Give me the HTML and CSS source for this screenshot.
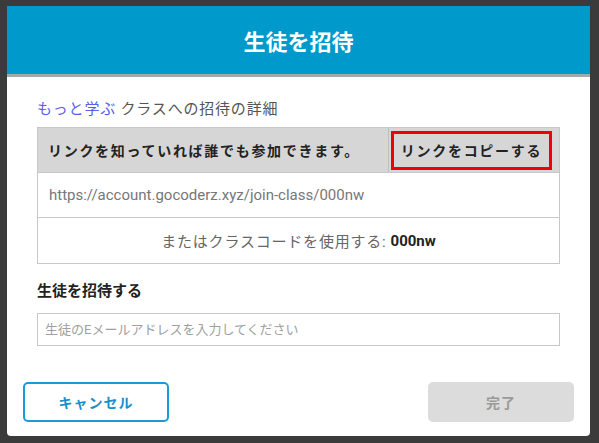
FILE: index.html
```html
<!DOCTYPE html>
<html lang="ja">
<head>
<meta charset="utf-8">
<title>生徒を招待</title>
<link rel="stylesheet" href="styles.css">
</head>
<body>
<div class="modal">
  <div class="modal-head">生徒を招待</div>
  <div class="modal-body">
    <p class="intro"><a href="#">もっと学ぶ</a> クラスへの招待の詳細</p>
    <div class="invite-table">
      <div class="row head-row">
        <div class="share-note">リンクを知っていれば誰でも参加できます。</div>
        <div class="copy-cell"><span class="copy-btn">リンクをコピーする</span></div>
      </div>
      <div class="row url-row">https://account.gocoderz.xyz/join-class/000nw</div>
      <div class="row code-row">またはクラスコードを使用する: <b>000nw</b></div>
    </div>
    <h3 class="section-title">生徒を招待する</h3>
    <input class="email" type="text" placeholder="生徒のEメールアドレスを入力してください">
  </div>
  <div class="modal-foot">
    <button class="btn cancel">キャンセル</button>
    <button class="btn done">完了</button>
  </div>
</div>
</body>
</html>
```
FILE: styles.css
```css
html, body {
  margin: 0;
  height: 100%;
}

body {
  background: #3b3b3b;
  font-family: Roboto, "Noto Sans CJK JP", sans-serif;
  padding: 6px 9px 0 7px;
  box-sizing: border-box;
}

.modal {
  width: 583px;
  background: #fff;
  border-radius: 0 0 4px 4px;
}

.modal-head {
  height: 68px;
  background: #0099cc;
  border-bottom: 3px solid #a3a8ab;
  color: #fff;
  font-weight: bold;
  font-size: 22px;
  display: flex;
  align-items: center;
  justify-content: center;
}

.modal-body {
  padding: 21px 30px 0 30px;
}

.intro {
  margin: 0;
  font-size: 15px;
  line-height: 22px;
  letter-spacing: 0.8px;
  color: #555;
}

.intro a {
  color: #5a5af0;
  text-decoration: none;
}

.invite-table {
  margin-top: 7px;
  border: 1px solid #c8c8c8;
}

.row {
  border-top: 1px solid #c8c8c8;
}

.row:first-child {
  border-top: none;
}

.head-row {
  display: flex;
  background: #d6d6d6;
  height: 44px;
  font-weight: bold;
  font-size: 14px;
  letter-spacing: 1.7px;
  color: #222;
}

.share-note {
  flex: 1;
  display: flex;
  align-items: center;
  padding-left: 10px;
  border-right: 1px solid #c0c0c0;
}

.copy-cell {
  width: 168px;
  display: flex;
  align-items: center;
  padding-left: 2px;
}

.copy-btn {
  width: 155px;
  height: 33px;
  border: 3px solid #f00000;
  display: flex;
  align-items: center;
  justify-content: center;
}

.url-row {
  height: 44px;
  display: flex;
  align-items: center;
  padding-left: 11px;
  font-size: 15px;
  color: #777;
}

.code-row {
  height: 45px;
  display: flex;
  align-items: center;
  justify-content: center;
  font-size: 15px;
  letter-spacing: 0.8px;
  color: #666;
}

.code-row b {
  color: #222;
  margin-left: 4px;
  letter-spacing: 0;
}

.section-title {
  margin: 16px 0 0 0;
  font-size: 15px;
  line-height: 22px;
  color: #222;
}

.email {
  display: block;
  width: 100%;
  box-sizing: border-box;
  margin-top: 11px;
  height: 33px;
  border: 1px solid #c8c8c8;
  padding: 0 7px;
  font-family: Roboto, "Noto Sans CJK JP", sans-serif;
  font-size: 13px;
  outline: none;
}

.email::placeholder {
  color: #a0a0a0;
}

.modal-foot {
  display: flex;
  justify-content: space-between;
  padding: 36px 16px 14px 16px;
}

.btn {
  width: 146px;
  height: 40px;
  border-radius: 5px;
  font-family: Roboto, "Noto Sans CJK JP", sans-serif;
  font-size: 14px;
  font-weight: bold;
  letter-spacing: 1px;
}

.cancel {
  background: #fff;
  border: 2px solid #1a9bd7;
  color: #1a8fc9;
}

.done {
  background: #dcdcdc;
  border: none;
  color: #9a9a9a;
}
```
